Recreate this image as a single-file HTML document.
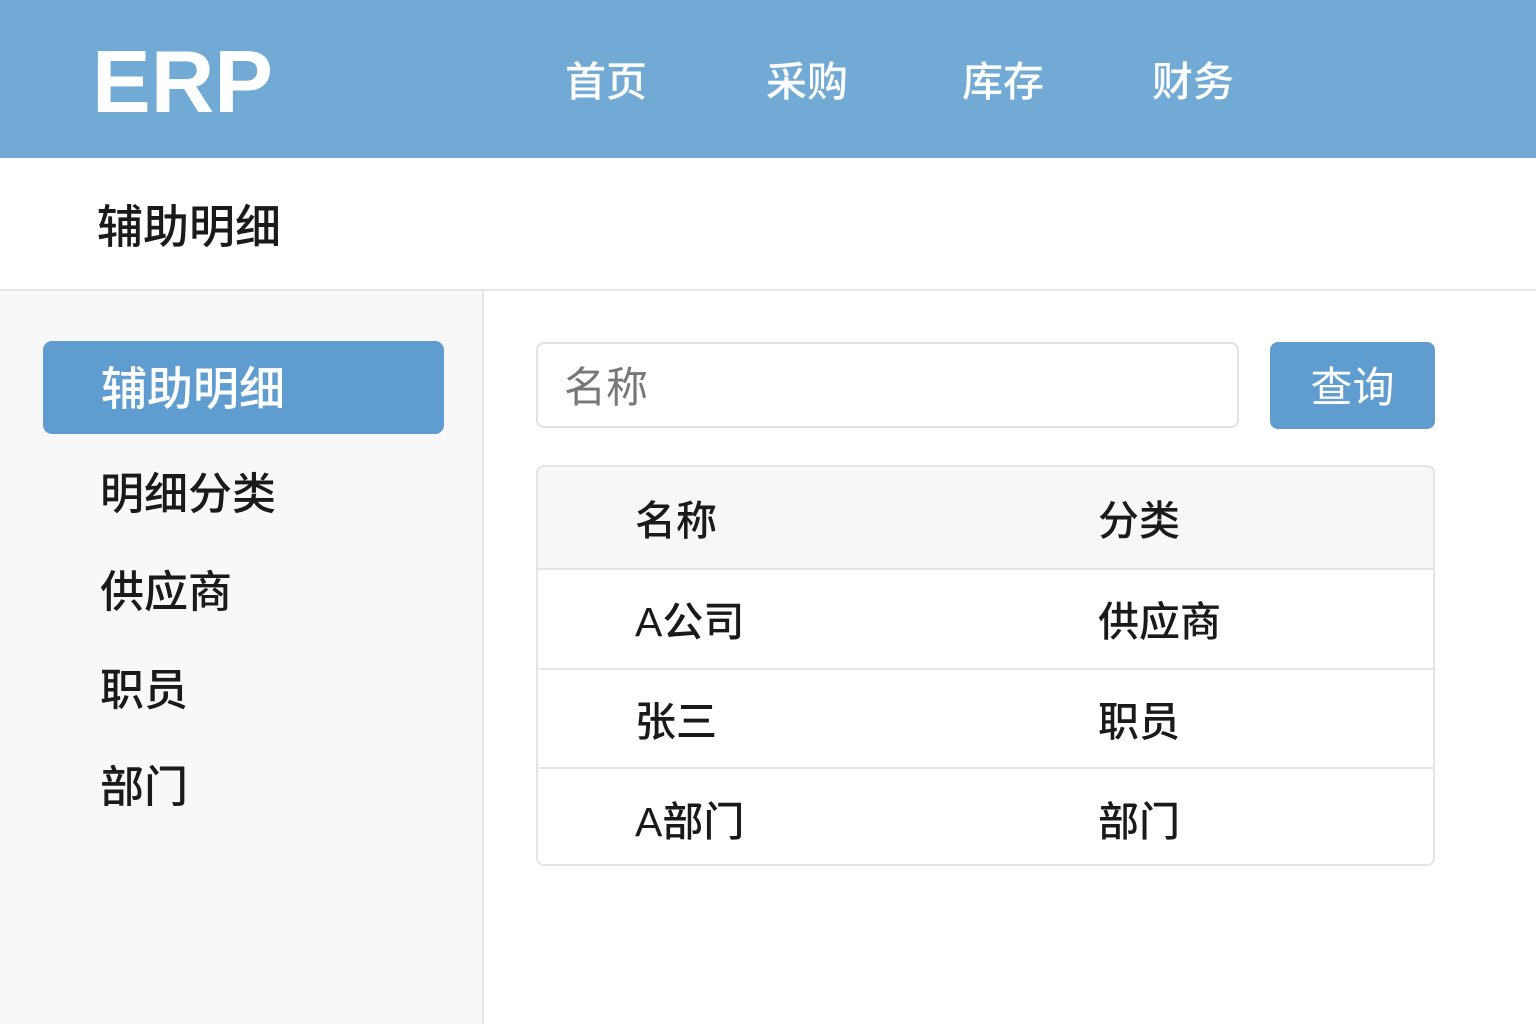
<!DOCTYPE html>
<html><head><meta charset="utf-8"><style>
*{margin:0;padding:0;box-sizing:border-box}
body{width:1536px;height:1024px;overflow:hidden;background:#fff;font-family:"Liberation Sans","Noto Sans CJK SC",sans-serif;position:relative;color:#1a1a1a}
.hd{position:absolute;left:0;top:0;width:1536px;height:158px;background:#72aad6}
.logo{position:absolute;left:92px;top:34px;font-size:88px;font-weight:bold;color:#fff;line-height:96px;letter-spacing:0px}
.nav{position:absolute;top:55px;font-size:41px;color:#fff;font-weight:500;line-height:54px}
.title{position:absolute;left:97px;top:197px;font-size:46px;line-height:60px;font-weight:500}
.line{position:absolute;left:0;top:289px;width:1536px;height:2px;background:#e6e6e6}
.side{position:absolute;left:0;top:291px;width:484px;height:733px;background:#f8f8f8;border-right:2px solid #e6e6e6}
.act{position:absolute;left:43px;top:341px;width:401px;height:93px;background:#5f9ccf;border-radius:9px;color:#fff;font-size:46px;font-weight:500;line-height:97px;padding-left:58px}
.it{position:absolute;left:100px;font-size:44px;line-height:60px;font-weight:500}
.inp{position:absolute;left:536px;top:342px;width:703px;height:86px;border:2px solid #e2e2e2;border-radius:8px;font-size:42px;color:#777;line-height:88px;padding-left:26px}
.btn{position:absolute;left:1270px;top:342px;width:165px;height:87px;background:#5f9ccf;border-radius:8px;color:#fff;font-size:42px;line-height:91px;text-align:center}
.tb{position:absolute;left:536px;top:465px;width:899px;height:401px;border:2px solid #e4e4e4;border-radius:8px;overflow:hidden}
.r{position:absolute;left:0;width:100%;border-bottom:2px solid #e6e6e6;font-size:41px;font-weight:500}
.r span{position:absolute;top:50%;transform:translateY(-52%)}
.c1{left:97px}.c2{left:560px}
</style></head><body>
<div class="hd">
<div class="logo">ERP</div>
<div class="nav" style="left:565px">首页</div>
<div class="nav" style="left:766px">采购</div>
<div class="nav" style="left:962px">库存</div>
<div class="nav" style="left:1152px">财务</div>
</div>
<div class="title">辅助明细</div>
<div class="line"></div>
<div class="side">
<div class="act" style="top:50px">辅助明细</div>
<div class="it" style="top:174px">明细分类</div>
<div class="it" style="top:272px">供应商</div>
<div class="it" style="top:370px">职员</div>
<div class="it" style="top:467px">部门</div>
</div>
<div class="inp">名称</div>
<div class="btn">查询</div>
<div class="tb">
<div class="r" style="top:0;height:103px;background:#f7f7f7"><span class="c1">名称</span><span class="c2">分类</span></div>
<div class="r" style="top:103px;height:100px"><span class="c1">A公司</span><span class="c2">供应商</span></div>
<div class="r" style="top:203px;height:99px"><span class="c1">张三</span><span class="c2">职员</span></div>
<div class="r" style="top:302px;height:99px;border-bottom:none"><span class="c1">A部门</span><span class="c2">部门</span></div>
</div>
</body></html>
